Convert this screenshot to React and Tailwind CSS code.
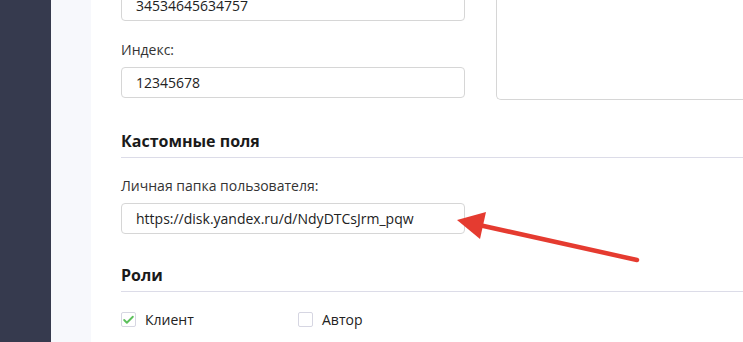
import { Check } from 'lucide-react';

function Field({ label, value }) {
  return (
    <div className="flex flex-col">
      {label && <label className="text-[14px] leading-[20px] text-[#333] mb-[7px]">{label}</label>}
      <div className="h-[31px] w-[344px] rounded-[4px] border border-[#d6d6d6] bg-white px-[14px] flex items-center text-[14px] text-[#222]">
        {value}
      </div>
    </div>
  );
}

function Section({ title, children }) {
  return (
    <div className="flex flex-col">
      <h3 className="text-[16px] leading-[24px] font-bold text-[#1a1a1a]">{title}</h3>
      <div className="mt-[4px] h-px bg-[#dcdce8]" />
      {children}
    </div>
  );
}

function CheckBox({ label, checked }) {
  return (
    <label className="flex items-center gap-[9px] text-[14px] text-[#222]">
      <span className="w-[15px] h-[15px] rounded-[2px] border border-[#d6d6e2] bg-white flex items-center justify-center">
        {checked && <Check size={14} strokeWidth={3.5} className="text-[#5cc05c]" />}
      </span>
      {label}
    </label>
  );
}

export default function App() {
  return (
    <div className="relative flex h-[342px] w-[743px] overflow-hidden bg-white font-['Open_Sans',sans-serif]">
      {/* sidebar */}
      <aside className="w-[51px] shrink-0 bg-[#363a4e]" />
      <div className="w-[40px] shrink-0 bg-[#f7f8fc]" />

      {/* content */}
      <main className="flex-1 pl-[30px] -mt-[10px]">
        <div className="flex gap-[31px]">
          <div className="flex flex-col gap-[19px]">
            <Field value="34534645634757" />
            <Field label="Индекс:" value="12345678" />
          </div>
          <div className="flex-1 -mt-[20px] h-[130px] rounded-bl-[5px] border border-r-0 border-[#d6d6d6]" />
        </div>

        <div className="mt-[29px]">
          <Section title="Кастомные поля">
            <div className="mt-[18px]">
              <Field label="Личная папка пользователя:" value="https://disk.yandex.ru/d/NdyDTCsJrm_pqw" />
            </div>
          </Section>
        </div>

        <div className="mt-[29px]">
          <Section title="Роли">
            <div className="mt-[17px] flex">
              <div className="w-[177px]">
                <CheckBox label="Клиент" checked />
              </div>
              <CheckBox label="Автор" />
            </div>
          </Section>
        </div>
      </main>

      {/* annotation arrow */}
      <svg className="absolute left-0 top-0 pointer-events-none" width="743" height="342">
        <line x1="637" y1="260" x2="470" y2="223" stroke="#e53b30" strokeWidth="4.5" strokeLinecap="round" />
        <polygon points="457,220 486,212 480,239" fill="#e53b30" />
      </svg>
    </div>
  );
}
